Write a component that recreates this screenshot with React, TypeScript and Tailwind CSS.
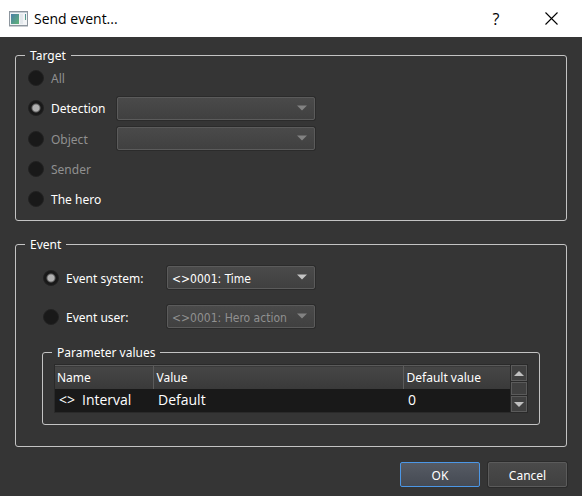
import type { ReactNode } from "react";

function Group({ title, className, children }: { title: string; className?: string; children: ReactNode }) {
  return (
    <fieldset className={`min-w-0 rounded-[3px] border border-[#c3c3c3] ${className ?? ""}`}>
      <legend className="ml-[9px] h-4 px-[5px] leading-[18px]">{title}</legend>
      {children}
    </fieldset>
  );
}

type RadioProps = { name: string; label: string; checked?: boolean; disabled?: boolean };

function Radio({ name, label, checked, disabled }: RadioProps) {
  return (
    <label className="flex items-center gap-[7px] has-disabled:text-[#909090]">
      <input
        type="radio"
        name={name}
        defaultChecked={checked}
        disabled={disabled}
        className="size-4 shrink-0 appearance-none rounded-full border border-[#222222] bg-[#191919] checked:bg-[radial-gradient(circle,#b0b0b0_3px,#191919_5px)]"
      />
      <span className="pt-0.5 leading-4 whitespace-nowrap">{label}</span>
    </label>
  );
}

function Combo({ label, options, disabled }: { label: string; options: string[]; disabled?: boolean }) {
  return (
    <div className="relative">
      <select
        aria-label={label}
        disabled={disabled}
        className="block h-[23px] w-full appearance-none rounded-[2px] border border-[#5b5b5b] bg-linear-to-b from-[#4a4a4a] to-[#404040] pt-0.5 pl-1 font-['DejaVu_Sans_Condensed','Noto_Sans',sans-serif] text-white opacity-100 shadow-[0_0_0_1px_#2b2b2b] disabled:text-[#909090]"
      >
        {options.map((o) => (
          <option key={o}>{o}</option>
        ))}
      </select>
      <svg
        viewBox="0 0 10 6"
        className={`pointer-events-none absolute top-2 right-2 h-1.5 w-2.5 ${disabled ? "text-[#828282]" : "text-[#c4c4c4]"}`}
      >
        <path d="M0 0.5H10L5 5.5Z" fill="currentColor" />
      </svg>
    </div>
  );
}

function ScrollArrow({ label, d }: { label: string; d: string }) {
  return (
    <button aria-label={label} className="flex h-4 items-center justify-center border border-[#5b5b5b] bg-[#404040]">
      <svg viewBox="0 0 10 5" className="h-[5px] w-2.5">
        <path d={d} fill="#c0c0c0" />
      </svg>
    </button>
  );
}

export default function App() {
  return (
    <div className="flex min-h-screen flex-col bg-[#353535] font-['Noto_Sans',sans-serif] text-[12px] text-white">
      <header className="flex h-[37px] items-center bg-white pr-6 pl-[9px] font-['Open_Sans',sans-serif] text-black">
        <svg viewBox="0 0 19 16" className="h-4 w-[19px]">
          <defs>
            <linearGradient id="pane" x1="0" y1="0" x2="1" y2="1">
              <stop offset="0" stopColor="#4a7fa8" />
              <stop offset="1" stopColor="#5fb376" />
            </linearGradient>
          </defs>
          <rect x="0.5" y="0.5" width="18" height="14" fill="#f2f4f6" stroke="#8d969e" />
          <path d="M0 15.5H19" stroke="#c9cdd1" />
          <rect x="1" y="1" width="17" height="1" fill="#c5ced6" />
          <rect x="2" y="3" width="8" height="10" fill="url(#pane)" />
          <rect x="11" y="3" width="3" height="10" fill="#e3e8ec" />
          <rect x="16" y="3" width="1" height="6" fill="url(#pane)" />
        </svg>
        <h1 className="ml-1.5 flex-1 text-[14px] leading-5">Send event...</h1>
        <button aria-label="Help" className="mr-10 flex size-[18px] items-center justify-center text-[16px] leading-5">?</button>
        <button aria-label="Close" className="flex size-[13px] items-center justify-center">
          <svg viewBox="0 0 13 13" className="size-[13px]">
            <path d="M0.5 0.5L12.5 12.5M12.5 0.5L0.5 12.5" stroke="#000" strokeWidth="1.1" />
          </svg>
        </button>
      </header>

      <main className="px-[15px] pt-[10px]">
        <Group title="Target">
          <div className="grid grid-cols-[89px_198px] grid-rows-[30px_30px_31px_30px_29px] items-center pb-[7px] pl-3">
            <div className="col-span-2"><Radio name="target" label="All" disabled /></div>
            <Radio name="target" label="Detection" checked />
            <Combo label="Detection target" options={[""]} disabled />
            <Radio name="target" label="Object" disabled />
            <Combo label="Object target" options={[""]} disabled />
            <div className="col-span-2"><Radio name="target" label="Sender" disabled /></div>
            <div className="col-span-2"><Radio name="target" label="The hero" /></div>
          </div>
        </Group>

        <Group title="Event" className="mt-[15px]">
          <div className="px-[26px] pt-[14px] pb-[21px]">
            <div className="grid grid-cols-[125px_148px] items-center gap-y-4">
              <div className="pl-px"><Radio name="event" label="Event system:" checked /></div>
              <Combo label="System event" options={["<>0001: Time"]} />
              <div className="pl-px"><Radio name="event" label="Event user:" /></div>
              <Combo label="User event" options={["<>0001: Hero action"]} disabled />
            </div>

            <Group title="Parameter values" className="mt-4">
              <div className="px-[11px] pt-1 pb-[11px]">
                <div className="flex h-[49px] border border-[#2a2a2a] bg-[#191919]">
                  <table className="min-w-0 flex-1 table-fixed border-collapse text-left">
                    <colgroup>
                      <col className="w-[98px]" />
                      <col />
                      <col className="w-[107px]" />
                    </colgroup>
                    <thead>
                      <tr className="h-[23px] border-t border-[#5b5b5b] bg-linear-to-b from-[#464646] to-[#3a3a3a]">
                        <th className="border-r border-[#5b5b5b] pt-0.5 pl-0.5 font-normal">Name</th>
                        <th className="border-r border-[#5b5b5b] pt-0.5 pl-[3px] font-normal">Value</th>
                        <th className="pt-0.5 pl-[3px] font-normal">Default value</th>
                      </tr>
                    </thead>
                    <tbody>
                      <tr className="h-6 font-['Open_Sans',sans-serif] text-[14px] leading-5">
                        <td className="pb-0.5 pl-1"><span className="mr-[7px]">&lt;&gt;</span>Interval</td>
                        <td className="pb-0.5 pl-[5px]">Default</td>
                        <td className="pb-0.5 pl-[5px]">0</td>
                      </tr>
                    </tbody>
                  </table>
                  <div className="flex w-[17px] flex-col gap-px bg-[#2a2a2a] pl-px">
                    <ScrollArrow label="Scroll up" d="M0 5H10L5 0Z" />
                    <div className="flex-1 border border-[#5b5b5b] bg-[#404040]" />
                    <ScrollArrow label="Scroll down" d="M0 0H10L5 5Z" />
                  </div>
                </div>
              </div>
            </Group>
          </div>
        </Group>

        <div className="mt-[15px] flex justify-end gap-2 pb-2">
          <button className="h-[25px] w-20 rounded-[2px] border border-[#4c97e6] bg-linear-to-b from-[#565b64] to-[#454a53] pt-0.5">OK</button>
          <button className="h-[25px] w-[79px] rounded-[2px] border border-[#5b5b5b] bg-linear-to-b from-[#4a4a4a] to-[#404040] pt-0.5 shadow-[0_0_0_1px_#2b2b2b]">Cancel</button>
        </div>
      </main>
    </div>
  );
}
